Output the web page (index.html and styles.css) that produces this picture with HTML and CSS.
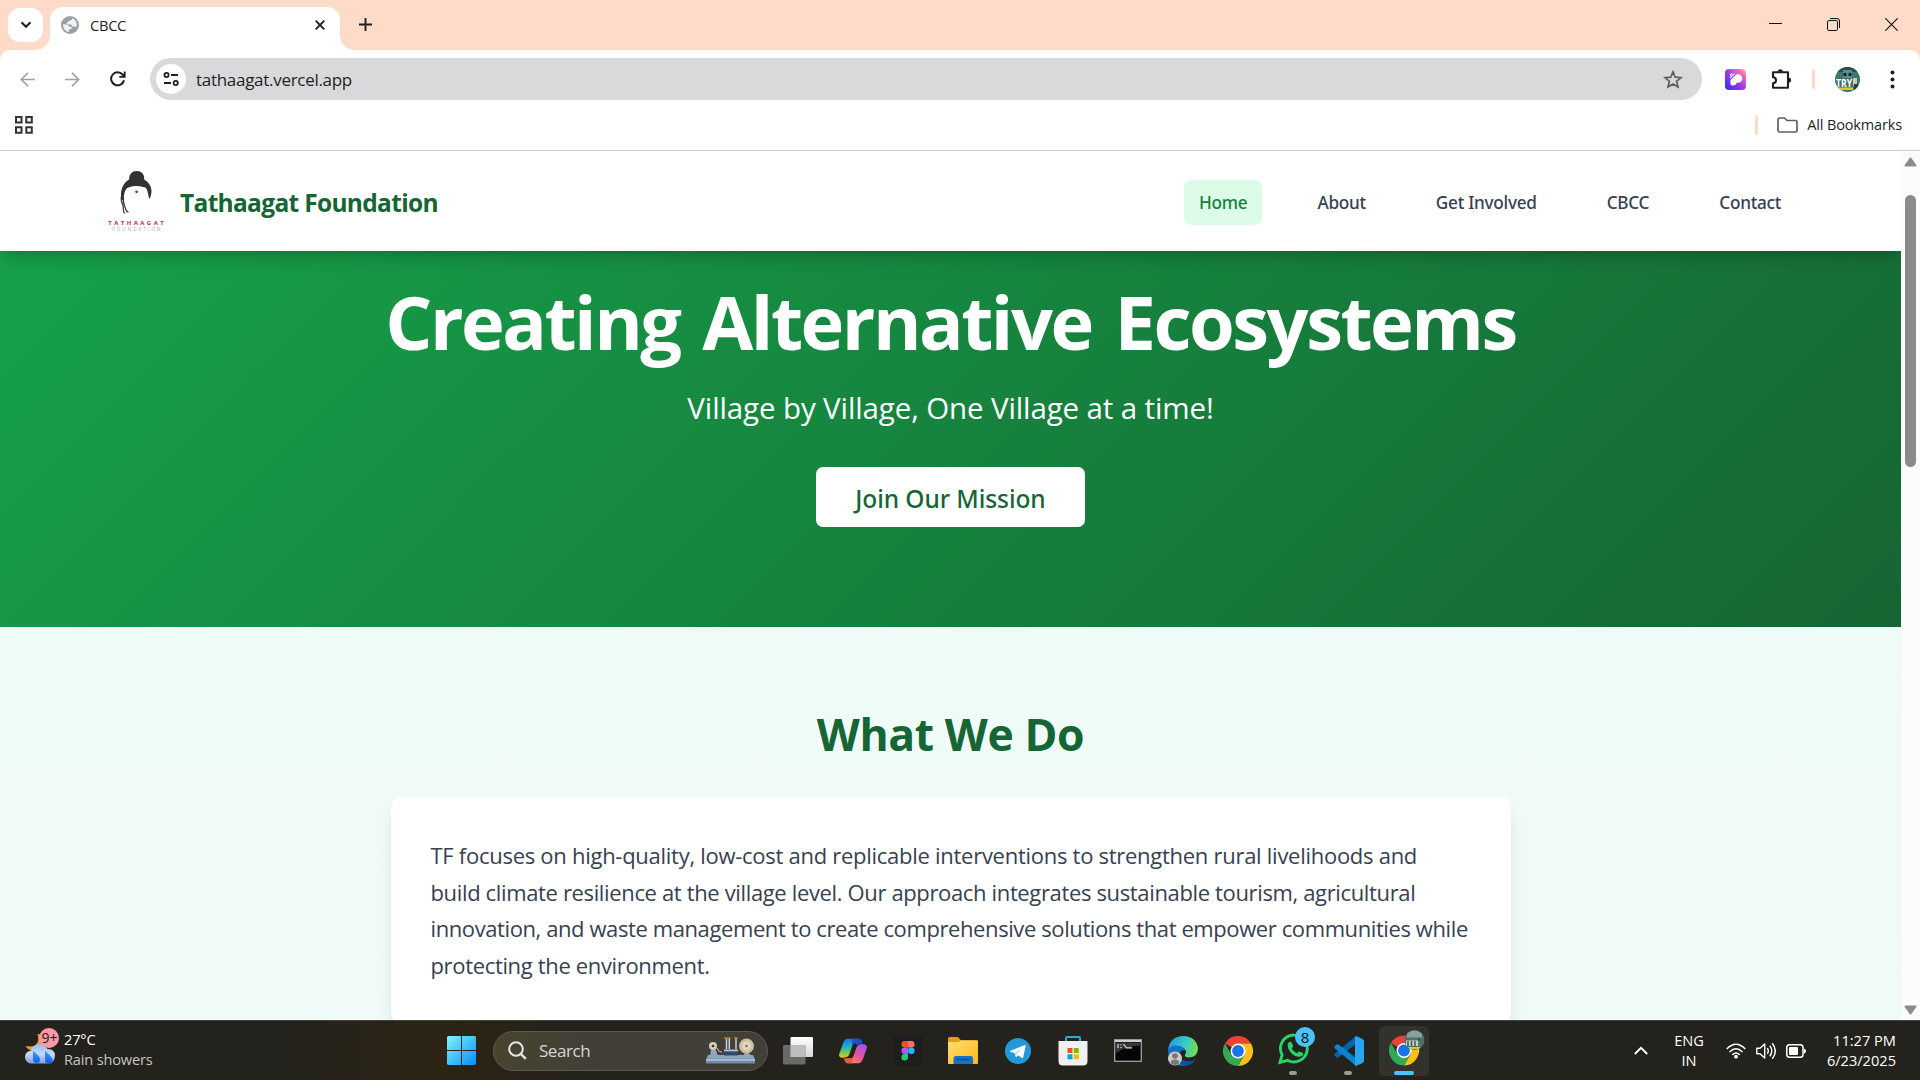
FILE: index.html
```html
<!DOCTYPE html>
<html lang="en">
<head>
<meta charset="utf-8">
<title>CBCC</title>
<link rel="stylesheet" href="styles.css">
</head>
<body>
<div class="screen">
  <div class="tabstrip">
    <button class="tab-search" aria-label="Search tabs"><svg width="12" height="8" viewBox="0 0 12 8"><path d="M1.5 1.2 6 5.7l4.500-4.500" fill="none" stroke="#1f1f1f" stroke-width="2.100"/></svg></button>
    <div class="tab">
      <svg class="favicon" width="18" height="18" viewBox="0 0 18 18"><circle cx="9" cy="9" r="9" fill="#9aa0a6"/><path d="M2 8.200 6 8.500q1.800.3 2 2l2.300.5q1 .6.3 1.700L8 13.500V16Q2.500 15 2 9zM11 2.200q.5 1.800-1.300 2.300L7.500 5 7 6.500l-1.500.5.5 1.300 4 .2 1.500 2 3 .3 1.300-.5Q16.500 4 11 2.200z" fill="#f1f2f3"/></svg>
      <span class="tab-title">CBCC</span>
      <svg class="tab-close" width="10" height="10" viewBox="0 0 10 10"><path d="M.7.7l8.600 8.600M9.300.7.7 9.300" stroke="#1f1f1f" stroke-width="1.900"/></svg>
    </div>
    <svg class="new-tab" width="13" height="13" viewBox="0 0 13 13"><path d="M6.500 0v13M0 6.500h13" stroke="#1f1f1f" stroke-width="1.900"/></svg>
    <div class="window-buttons">
      <svg width="13" height="13" viewBox="0 0 13 13"><path d="M0 5.500h13" stroke="#111" stroke-width="1"/></svg>
      <svg width="13" height="13" viewBox="0 0 13 13"><rect x=".5" y="2.500" width="10" height="10" rx="1.300" fill="none" stroke="#111"/><path d="M3 .5h7a2.500 2.500 0 0 1 2.500 2.500v7" fill="none" stroke="#111"/></svg>
      <svg width="13" height="13" viewBox="0 0 13 13"><path d="M.3.3l12.400 12.400M12.700.3.3 12.700" stroke="#111" stroke-width="1.100"/></svg>
    </div>
  </div>

  <div class="toolbar-wrap">
    <div class="toolbar">
      <div class="nav-icons">
        <svg width="15" height="15" viewBox="0 0 15 15"><path d="M15 7.500H1.500M8 .8 1.300 7.500 8 14.200" fill="none" stroke="#a3a3a3" stroke-width="1.700"/></svg>
        <svg width="15" height="15" viewBox="0 0 15 15"><path d="M0 7.500h13.500M7 .8l6.700 6.700L7 14.200" fill="none" stroke="#a3a3a3" stroke-width="1.700"/></svg>
        <svg width="16" height="16" viewBox="0 0 16 16"><path d="M14 9.200A6.500 6.500 0 1 1 12.500 3.500L14.500 5.500" fill="none" stroke="#1f1f1f" stroke-width="2"/><path d="M15.600.5v6.300H9.300V5h4.400V.5z" fill="#1f1f1f"/></svg>
      </div>
      <div class="address">
        <span class="site-info"><svg width="16" height="14" viewBox="0 0 16 14"><g fill="none" stroke="#1f1f1f" stroke-width="1.800"><circle cx="3.500" cy="3" r="2.100"/><path d="M8 3h7M1 11h7"/><circle cx="12.700" cy="11" r="2.100"/></g></svg></span>
        <span class="url">tathaagat.vercel.app</span>
        <svg class="star" width="20" height="19" viewBox="0 0 20 19"><path d="M10 1.800l2.200 5.300 5.800.5-4.400 3.700 1.400 5.600-5-3-5 3 1.400-5.600L2 7.600l5.800-.5z" fill="none" stroke="#5f5f61" stroke-width="1.700"/></svg>
      </div>
      <div class="actions">
        <svg class="ext" width="21" height="21" viewBox="0 0 21 21"><defs><linearGradient id="ex" x1="0" y1="1" x2="1" y2="0"><stop offset="0" stop-color="#2f2be8"/><stop offset=".5" stop-color="#a03cf0"/><stop offset=".8" stop-color="#f768b5"/><stop offset="1" stop-color="#ffc98e"/></linearGradient></defs><rect width="21" height="21" rx="4" fill="url(#ex)"/><path d="M5.500 15V11L11.500 5.200h1.500a4.300 4.300 0 0 1 0 8.600h-1.500q-.5 2.700-3.500 2.700-2.500 0-2.500-1.500z" fill="#fff"/><path d="M5 6.500 7 4.500M5 9l4.500-4.500" stroke="#fff" stroke-width="1.100"/></svg>
        <svg class="puzzle" width="21" height="21" viewBox="0 0 21 21"><path d="M2 3.200h15v15.600H2v-4.600a2.900 2.900 0 0 0 0-6z" fill="none" stroke="#1f1f1f" stroke-width="2.100" stroke-linejoin="round"/><path d="M6.700 2.800a2.600 2.600 0 0 1 5.200 0zM17.500 8.400a2.600 2.600 0 0 1 0 5.200z" fill="#1f1f1f"/></svg>
        <span class="divider"></span>
        <svg class="avatar" width="25" height="25" viewBox="0 0 25 25"><defs><clipPath id="av"><circle cx="12.500" cy="12.500" r="12.500"/></clipPath></defs><g clip-path="url(#av)"><rect width="25" height="25" fill="#3c7471"/><path d="M0 0h25v5H0z" fill="#24504f"/><path d="M8 3h9v8H8z" fill="#5d8e88"/><circle cx="10" cy="7.500" r="1.700" fill="#222"/><circle cx="15" cy="7.500" r="1.700" fill="#222"/><path d="M18 11h4v8h-4z" fill="#d8c5b0"/><path d="M19 17h4v6h-4z" fill="#3b3634"/><path d="M3 20.500h15V23H3z" fill="#e8c31b"/><text x="1" y="20" font-size="10.500" font-weight="700" textLength="16" lengthAdjust="spacingAndGlyphs" fill="#fff">TRY</text></g></svg>
        <svg class="dots" width="5" height="19" viewBox="0 0 5 19"><g fill="#1f1f1f"><circle cx="2.500" cy="2.500" r="2"/><circle cx="2.500" cy="9.500" r="2"/><circle cx="2.500" cy="16.500" r="2"/></g></svg>
      </div>
    </div>
    <div class="bookmarks">
      <svg width="18" height="18" viewBox="0 0 18 18"><path d="M1 1h5.500v5.500H1zM11.300 1h5.500v5.500h-5.500zM1 11.300h5.500v5.500H1zM11.300 11.300h5.500v5.500h-5.500z" fill="none" stroke="#333" stroke-width="2"/></svg>
      <span class="divider"></span>
      <svg class="folder" width="21" height="16" viewBox="0 0 21 16"><path d="M1 13.500v-11Q1 1 2.500 1h5l2.500 2.500h8.500Q20 3.500 20 5v8.500Q20 15 18.500 15h-16Q1 15 1 13.500z" fill="none" stroke="#5f5f5f" stroke-width="1.700"/></svg>
      <span class="bm-text">All Bookmarks</span>
    </div>
  </div>

  <div class="viewport">
    <div class="page">
      <header class="site-header">
        <svg class="logo" width="65" height="70" viewBox="105 165 65 70">
          <g fill="#323232"><path d="M129 180q0-9 7.700-9t7.700 9z"/><path d="M121.200 199C119.500 187 126 179.500 132 178.500h9c8 2 11.300 9 10.400 14.500Q150.800 197 149.300 199C147.500 192 147.500 186.500 143 187q-7-2.200-14 0.300C125 188.500 124 193 123.500 201z"/></g>
          <path d="M121.700 196c-2 5 1.500 8 1.500 11 .2 4 .5 6.500 2 6M123.500 197c-1 5 .8 8 1.500 10 .8 3.500 2 5 3.500 5.200" fill="none" stroke="#323232" stroke-width="1.200"/>
          <circle cx="136.600" cy="191.800" r="1.400" fill="#c42035"/>
          <text x="108.200" y="224.500" font-size="6" font-weight="700" textLength="55.500" fill="#c22a45">TATHAAGAT</text>
          <text x="112.300" y="230.600" font-size="4.500" textLength="48" fill="#a9a9a9">FOUNDATION</text>
        </svg>
        <span class="brand">Tathaagat Foundation</span>
        <nav class="nav">
          <a class="active">Home</a><a>About</a><a>Get Involved</a><a>CBCC</a><a>Contact</a>
        </nav>
      </header>
      <section class="hero">
        <h1>Creating Alternative Ecosystems</h1>
        <p>Village by Village, One Village at a time!</p>
        <a class="cta">Join Our Mission</a>
      </section>
      <section class="about">
        <h2>What We Do</h2>
        <div class="card">
          <p><span class="l1">TF focuses on high-quality, low-cost and replicable interventions to strengthen rural livelihoods and</span> <span class="l2">build climate resilience at the village level. Our approach integrates sustainable tourism, agricultural</span> <span class="l3">innovation, and waste management to create comprehensive solutions that empower communities while</span> <span class="l4">protecting the environment.</span></p>
        </div>
      </section>
    </div>
    <div class="scrollbar">
      <svg width="13" height="10" viewBox="0 0 13 10"><path d="M6.500 1.500 11.500 8.500h-10z" fill="#8b8b8b" stroke="#8b8b8b" stroke-width="2" stroke-linejoin="round"/></svg>
      <span class="thumb"></span>
      <svg class="down" width="13" height="10" viewBox="0 0 13 10"><path d="M6.500 8.500 1.500 1.500h10z" fill="#8b8b8b" stroke="#8b8b8b" stroke-width="2" stroke-linejoin="round"/></svg>
    </div>
  </div>

  <div class="taskbar">
    <div class="weather">
      <svg width="36" height="38" viewBox="0 0 36 38"><defs><linearGradient id="cl" x1="0" y1="0" x2="0" y2="1"><stop offset="0" stop-color="#8fbdf7"/><stop offset=".5" stop-color="#c5d9fa"/><stop offset="1" stop-color="#7f9fe0"/></linearGradient><linearGradient id="dr" x1="0" y1="0" x2="0" y2="1"><stop offset="0" stop-color="#3f9cf8"/><stop offset="1" stop-color="#0c5fe6"/></linearGradient></defs><path d="M12.500 7Q15 15 10 18.500 6 20 .5 19q3 5 9 4.500L20 17V8z" fill="#f0a020"/><path d="M7 36.500a6.500 6.500 0 0 1-1-13q2-6 8-6.500 6 0 8.500 5 7-.5 7.500 6.500-.5 7-6 8z" fill="url(#cl)"/><path d="M8 24q7 5 7 8.500a3.500 3.500 0 0 1-7 0zM20 24q7.500 6 7.500 9a3.700 3.700 0 0 1-7.500 0z" fill="url(#dr)"/><circle cx="24" cy="11" r="10" fill="#ff99a4"/><text x="16.500" y="16.200" font-size="14" textLength="16" lengthAdjust="spacingAndGlyphs" fill="#1a1a1a">9+</text></svg>
      <div class="weather-text"><span>27°C</span><span class="dim">Rain showers</span></div>
    </div>
    <div class="start"><svg width="29" height="29" viewBox="0 0 29 29"><defs><linearGradient id="wn" x1="0" y1="0" x2="1" y2="1"><stop offset="0" stop-color="#7df4ff"/><stop offset="1" stop-color="#0a8df5"/></linearGradient></defs><path d="M1 0h13v14H0V1zM15 0h13l1 1v13H15zM0 15h14v14H1l-1-1zM15 15h14v13l-1 1H15z" fill="url(#wn)"/></svg></div>
    <div class="search">
      <svg width="19" height="19" viewBox="0 0 19 19"><circle cx="8" cy="8" r="6.800" fill="none" stroke="#e6e6e6" stroke-width="2"/><path d="M12.800 12.800l5 5" stroke="#e6e6e6" stroke-width="2.400"/></svg>
      <span>Search</span>
      <svg class="art" width="49" height="27" viewBox="0 0 49 27"><path d="M2 18h45l2 5H0z" fill="#8ea6c4"/><path d="M0 21.500h49v5H0z" fill="#7189ac"/><path d="M0 22h49v2H0z" fill="#a3b7cf"/><path d="M4 19l1-6q2.500-2 5 0l2 6zM37 19l3-5 6 5z" fill="#8ea6c4"/><path d="M18 13h14v5.500H18z" fill="#33486b"/><path d="M18 12.500h14v1.800H18z" fill="#b6c6d8"/><path d="M20.500 1.500V12M23.300 1.500V12M30 1.500V12" stroke="#d4dbe2" stroke-width="1.400"/><path d="M18 1h6.500M28 1h3.500" stroke="#b58a36" stroke-width="1.700"/><circle cx="40.500" cy="9" r="7.500" fill="#cdbf9f"/><circle cx="40.500" cy="9" r="4.500" fill="#e0d6bd"/><circle cx="40.500" cy="9" r="1.200" fill="#7b6a50"/><circle cx="7" cy="9" r="4" fill="#d8ccb0"/><circle cx="7" cy="9" r="1.300" fill="#333"/><path d="M11 11q2 5 5 4" stroke="#d8ccb0" fill="none"/></svg>
    </div>
    <div class="apps">
      <span class="app"><svg width="30" height="28" viewBox="0 0 30 28"><defs><linearGradient id="tv" x1="0" y1="0" x2="0" y2="1"><stop offset="0" stop-color="#fff"/><stop offset="1" stop-color="#d8d8d8"/></linearGradient></defs><rect x="7.500" width="22.500" height="20" rx="1" fill="url(#tv)"/><rect y="8" width="22.500" height="19.500" rx="1" fill="#777" fill-opacity=".85"/><path d="M7.500 8h15v12h-15z" fill="#bdbdbd"/></svg></span>
      <span class="app"><svg width="30" height="26" viewBox="0 0 30 26"><defs><linearGradient id="ca" x1="0" y1="0" x2="0" y2="1"><stop offset="0" stop-color="#1b73e8"/><stop offset=".45" stop-color="#22b5c8"/><stop offset=".75" stop-color="#7cc84a"/><stop offset="1" stop-color="#f3c21c"/></linearGradient><linearGradient id="cb" x1=".7" y1="0" x2="0" y2="1"><stop offset="0" stop-color="#a653e8"/><stop offset=".5" stop-color="#e9568e"/><stop offset="1" stop-color="#ff9b4c"/></linearGradient></defs><path d="M18 .8h3q2.500.3 3.300 4.200H17q-2 0-2.700 2.500l-2.800 8.500Q10.500 19 6.500 19.500 1 20.500 1 16.500L5 5.500Q6.300.8 9.500.8z" fill="url(#ca)"/><path d="M12 25.200H9.500q-2.500-.2-3.300-4.700h6.300q2.300 0 3-2.500l3-8.500Q19.800 6 23.500 6 29 5.800 29 9.500l-4 11.500q-1.500 4.200-5 4.200z" fill="url(#cb)"/><path d="M14 .8h7q2.500.3 3.300 4.500-3.800-.3-5.300 1.700L17 5q-2 0-2.700 2.500z" fill="#1a53c9"/><path d="M6.200 20.500h6.300q2 0 2.800-1.500L14 25.200H9.500Q7 25 6.200 20.500z" fill="#f0583c"/></svg></span>
      <span class="app"><svg width="30" height="30" viewBox="0 0 30 30"><rect width="30" height="30" rx="3" fill="#1e1e1e"/><path d="M11.700 5H15v6.500h-3.300a3.250 3.250 0 0 1 0-6.500z" fill="#f24e1e"/><path d="M15 5h3.300a3.250 3.250 0 0 1 0 6.500H15z" fill="#ff7262"/><path d="M11.700 11.500H15V18h-3.300a3.250 3.250 0 0 1 0-6.500z" fill="#a259ff"/><circle cx="18.300" cy="14.750" r="3.250" fill="#1abcfe"/><path d="M11.700 18H15v3.300a3.300 3.300 0 1 1-3.300-3.300z" fill="#24cb71"/></svg></span>
      <span class="app"><svg width="30" height="27" viewBox="0 0 30 27"><defs><linearGradient id="fo" x1="0" y1="0" x2="1" y2="1"><stop offset="0" stop-color="#ffdf75"/><stop offset="1" stop-color="#fbb915"/></linearGradient></defs><path d="M0 1.500Q0 0 1.500 0H9q1 0 2 1l2 2.500H28q2 0 2 2V9H0z" fill="#e0a010"/><path d="M0 6q0-1 1-1h9l3-1.800h16q1 0 1 1V26q0 1-1 1H1q-1 0-1-1z" fill="url(#fo)"/><path d="M5.500 27v-5.500q0-2.500 2.500-2.500h14.500q2.500 0 2.500 2.500V27z" fill="#1272c4"/><path d="M8.500 22.500h13" stroke="#094d8c" stroke-width="1.300"/></svg></span>
      <span class="app"><svg width="26" height="26" viewBox="0 0 26 26"><circle cx="13" cy="13" r="13" fill="#2398d6"/><path d="M5 13 20 7q.8-.2.600.7L18.200 19.500q-.3.900-1.200.4l-3.800-2.700-1.900 1.900q-.5.300-.6-.3L9.500 15 5.200 13.700q-.8-.3-.2-.7z" fill="#fff"/><path d="M9.700 15 17 10.200l-5.500 5.900-.6 2.700z" fill="#b9d8ea"/></svg></span>
      <span class="app"><svg width="30" height="30" viewBox="0 0 30 30"><path d="M8 6.500V2q0-1 1-1h12q1 0 1 1v4.500" fill="none" stroke="#28a8ea" stroke-width="2"/><path d="M.5 5h29v20q0 4.500-4.500 4.500H5Q.5 29.500.5 25z" fill="#f0f0f0"/><path d="M9.500 12h5v5h-5z" fill="#f25022"/><path d="M15.800 12h5v5h-5z" fill="#7fba00"/><path d="M9.500 18.300h5v5h-5z" fill="#00a4ef"/><path d="M15.800 18.300h5v5h-5z" fill="#ffb900"/></svg></span>
      <span class="app"><svg width="28" height="23" viewBox="0 0 28 23"><rect x=".7" y=".7" width="26.600" height="21.600" fill="#050505" stroke="#9aa0a6" stroke-width="1.300"/><path d="M1 1h26v2H1z" fill="#c9ced2"/><path d="M2 3.500h24v3Q12 7 2 14z" fill="#383838"/><path d="M4 5v4M7 5.500v1M7 8v1M9.500 5l3 4M12 8.800h6" stroke="#ddd" stroke-width="1.200"/></svg></span>
      <span class="app"><svg width="30" height="30" viewBox="0 0 30 30"><defs><linearGradient id="ea" x1="0" y1=".3" x2="1" y2=".5"><stop offset="0" stop-color="#1b9de2"/><stop offset=".55" stop-color="#36c9c9"/><stop offset="1" stop-color="#76dc4c"/></linearGradient></defs><path d="M0 14Q2 0 15.500 0 28 .5 30 12q0 9-9 9.500-5 0-4-3 2.500-3-1-6Q10 9 0 14z" fill="url(#ea)"/><path d="M0 15Q2 9 9 9.500q7 .8 8 5-5-1-5.500 4Q12 26 22 25.500q3 0 6-2.500Q23 30 15 30 1 29 0 15z" fill="#1272c9"/><path d="M11.500 18.500Q12 26 22 25.500q3 0 6-2.500Q23 30 16 30 8 27 11.500 18.500z" fill="#0c4f9b"/><circle cx="7" cy="22.500" r="7" fill="#c9c9c9"/><circle cx="7" cy="20" r="2.800" fill="#777"/><path d="M2.500 27Q3 23.500 7 23.500t4.500 3.500Q7 31 2.500 27z" fill="#777"/></svg></span>
      <span class="app"><svg width="30" height="30" viewBox="0 0 30 30"><g id="chrome"><path d="M15 15 2 7.500A15 15 0 0 1 28 7.500H15z" fill="#ea4335"/><path d="M15 7.500h13A15 15 0 0 1 15 30l6.500-11.200z" fill="#fbc116"/><path d="M21.500 18.800 15 30A15 15 0 0 1 2 7.500l6.500 11.300z" fill="#34a853"/><circle cx="15" cy="15" r="7.500" fill="#fff"/><circle cx="15" cy="15" r="5.900" fill="#1a73e8"/></g></svg></span>
      <span class="app running"><svg class="whatsapp" width="38" height="38" viewBox="0 0 38 38"><path d="M2 35.500l2.100-7.600A13.400 13.400 0 1 1 9.500 33.300z" fill="none" stroke="#25d366" stroke-width="2.900"/><path d="M9.500 17.500q1-3.500 3.700-2.500l2 4-1.500 2.500q2 3.500 5.300 4.800l2.200-2.100 4 2q.5 3-3.500 3.500-5 .3-9.200-4.500-2.800-3.500-3-7.700z" fill="#25d366"/><circle cx="27" cy="10" r="10" fill="#4cc2ff"/><text x="27" y="15.500" text-anchor="middle" font-size="15" fill="#111">8</text></svg></span>
      <span class="app running"><svg class="vscode" width="30" height="30" viewBox="0 0 30 30"><path d="M22 0v8L4.500 21.500Q3.500 22.200 2.500 21.500L.5 19.500q-.7-1 .2-1.700z" fill="#0065a9"/><path d="M22 30v-8L4.500 8.500Q3.500 7.800 2.500 8.500L.5 10.500q-.7 1 .2 1.700z" fill="#0b84cf"/><path d="M22 0l6.500 3Q30 4 30 5.200v19.600q0 1.200-1.500 2.200L22 30l-1-.8V.8z" fill="#2aa5f2"/></svg></span>
      <span class="app current"><svg width="36" height="36" viewBox="0 0 36 36"><defs><clipPath id="av2"><circle cx="25.500" cy="10" r="10"/></clipPath></defs><use href="#chrome" x="0" y="5.500"/><g clip-path="url(#av2)"><path d="M15 0h21v20H15z" fill="#4a716c"/><path d="M18 3.500q7-6 15 0v4H18z" fill="#86a39c"/><path d="M17 10.500h14v5.500H17z" fill="#c6d2cc"/><path d="M19 11v5M22.500 11v5M26 11v5M30 8v8" stroke="#34504d" stroke-width="1.400"/><path d="M16 17h15v2H16z" fill="#e2c62b"/></g></svg></span>
    </div>
    <div class="tray">
      <svg width="14" height="9" viewBox="0 0 14 9"><path d="M.8 8 7 1.800 13.200 8" fill="none" stroke="#fff" stroke-width="1.800"/></svg>
      <div class="lang"><span>ENG</span><span>IN</span></div>
      <div class="status">
        <svg width="20" height="16" viewBox="0 0 20 16"><g fill="none" stroke="#fff" stroke-width="1.500"><path d="M.7 6q9.300-9.500 18.600 0M3.500 9q6.500-6.500 13 0M6.300 11.800q3.700-3.700 7.400 0"/></g><circle cx="10" cy="13.700" r="1.900" fill="#fff"/></svg>
        <svg width="20" height="18" viewBox="0 0 20 18"><path d="M.8 6.200H4L8.700 2v14L4 11.800H.8z" fill="none" stroke="#fff" stroke-width="1.400" stroke-linejoin="round"/><path d="M11.300 6.200q2 2.800 0 5.600M13.800 3.800q4 5.200 0 10.400M16.300 1.300q6 7.700 0 15.400" fill="none" stroke="#fff" stroke-width="1.400"/></svg>
        <svg width="20" height="14" viewBox="0 0 20 14"><rect x=".8" y=".8" width="16.200" height="12.400" rx="2.800" fill="none" stroke="#fff" stroke-width="1.500"/><rect x="3" y="3" width="9" height="8" rx="1" fill="#fff"/><path d="M18 4.500q2 .5 2 2.500t-2 2.500z" fill="#fff"/></svg>
      </div>
      <div class="clock"><span>11:27 PM</span><span>6/23/2025</span></div>
    </div>
  </div>
</div>
</body>
</html>
```
FILE: styles.css
```css
* { box-sizing: border-box; }
body { margin: 0; overflow: hidden; font-family: "Open Sans", "Noto Sans", sans-serif; }
svg { display: block; flex: none; }
h1, h2, p { margin: 0; }

.screen { width: 1920px; height: 1080px; display: flex; flex-direction: column; overflow: hidden; background: #fff; }

/* Tab strip */
.tabstrip { height: 50px; flex: none; display: flex; background: #fddbc8; padding: 7px 22px 0 8px; }
.tab-search { width: 35px; height: 34px; margin: 1px 7px 0 0; padding: 0; border: 0; border-radius: 12px; background: #fff; display: flex; align-items: center; justify-content: center; }
.tab { position: relative; width: 290px; height: 43px; padding: 0 15px 7px 11px; background: #fff; border-radius: 13px 13px 0 0; display: flex; align-items: center; }
.tab::before, .tab::after { content: ""; position: absolute; bottom: 0; width: 14px; height: 14px; }
.tab::before { left: -14px; background: radial-gradient(circle at 0 0, transparent 13.500px, #fff 14px); }
.tab::after { right: -14px; background: radial-gradient(circle at 100% 0, transparent 13.500px, #fff 14px); }
.tab-title { margin-left: 11px; font-size: 14.700px; letter-spacing: -0.3px; color: #1f1f1f; }
.tab-close { margin-left: auto; }
.new-tab { margin: 11px 0 0 19px; }
.window-buttons { margin: 11px 0 0 auto; display: flex; gap: 45px; }

/* Toolbar */
.toolbar-wrap { height: 101px; flex: none; background: #fddbc8; border-bottom: 1px solid #c8c8c8; }
.toolbar { height: 58px; background: #fff; border-radius: 10px 10px 0 0; display: flex; align-items: center; padding: 0 25px 0 20px; }
.nav-icons { width: 130px; display: flex; gap: 30px; align-items: center; }
.address { width: 1552px; height: 42px; border-radius: 21px; background: #d9d9db; display: flex; align-items: center; padding: 0 19px 0 6px; }
.site-info { width: 30px; height: 30px; border-radius: 50%; background: #fff; display: flex; align-items: center; justify-content: center; }
.url { margin-left: 10px; font-size: 17px; letter-spacing: -0.29px; color: #1f1f1f; }
.star { margin-left: auto; }
.actions { flex: 1; display: flex; align-items: center; }
.ext { margin-left: 23px; }
.puzzle { margin-left: 25px; }
.divider { width: 3px; height: 20px; border-radius: 2px; background: #fddbc8; }
.toolbar .divider { margin-left: 20px; }
.avatar { margin-left: 20px; }
.dots { margin-left: 30px; }
.bookmarks { height: 42px; background: #fff; display: flex; align-items: center; padding: 0 18px 9px 15px; }
.bookmarks .divider { margin-left: auto; }
.folder { margin: 0 9px 0 19px; }
.bm-text { font-size: 14.500px; letter-spacing: -0.15px; color: #1f1f1f; }

/* Web page */
.viewport { height: 869px; flex: none; display: flex; overflow: hidden; }
.page { width: 1901px; background: linear-gradient(#effcf5, #effbf6 476px, #f0faf9 869px); overflow: hidden; }
.site-header { position: relative; height: 100px; background: #fff; display: flex; align-items: center; padding: 3px 105px 0; box-shadow: 0 12px 19px -4px rgba(0, 0, 0, .14), 0 5px 8px -4px rgba(0, 0, 0, .14); }
.logo { margin-top: -5px; }
.brand { margin-left: 10px; font-size: 24.500px; font-weight: 700; letter-spacing: -0.68px; color: #166534; }
.nav { margin-left: auto; margin-top: -1px; display: flex; gap: 40px; font-family: "Noto Sans", "Open Sans", sans-serif; font-size: 17.200px; font-weight: 500; letter-spacing: -0.27px; color: #374151; }
.nav a { height: 45px; line-height: 46px; padding: 0 15px; border-radius: 7px; }
.nav .active { background: #dcfce7; color: #15803d; }

.hero { height: 376px; padding-top: 33px; display: flex; flex-direction: column; align-items: center; color: #fff; background: linear-gradient(135deg, #16a34a, #166534) 0 -68px / 1901px 444px no-repeat; }
.hero h1 { font-size: 74px; line-height: 76px; letter-spacing: -2.500px; word-spacing: 6px; }
.hero p { margin-top: 29px; font-size: 29.500px; line-height: 38px; letter-spacing: -0.12px; }
.cta { width: 269px; height: 60px; margin-top: 40px; padding-top: 2px; border-radius: 7px; background: #fff; color: #166534; font-family: "Noto Sans", sans-serif; font-weight: 500; font-size: 24.500px; letter-spacing: -0.08px; line-height: 60px; text-align: center; }

.about { padding-top: 79px; display: flex; flex-direction: column; align-items: center; }
.about h2 { font-size: 44.500px; line-height: 56px; letter-spacing: -0.400px; color: #166534; }
.card { width: 1120px; height: 226px; margin-top: 35px; padding: 40px; border-radius: 10px; background: #fff; box-shadow: 0 12px 19px -4px rgba(0, 0, 0, .1), 0 5px 8px -5px rgba(0, 0, 0, .1); }
.card p { font-size: 22px; line-height: 36.560px; color: #374151; white-space: nowrap; }
.card span { display: block; }
.card .l1 { letter-spacing: -0.275px; }
.card .l2 { letter-spacing: -0.355px; }
.card .l3 { letter-spacing: -0.402px; }
.card .l4 { letter-spacing: -0.340px; }

.scrollbar { width: 19px; background: #fcfcfc; display: flex; flex-direction: column; align-items: center; padding: 6px 0 5px; }
.thumb { width: 11px; height: 272px; margin-top: 28px; border-radius: 6px; background: #8b8b8b; }
.down { margin-top: auto; }

/* Taskbar */
.taskbar { height: 60px; flex: none; display: flex; align-items: center; background: radial-gradient(circle at 440px 30px, #2d2414, #24221c 150px, #24221c); border-top: 1px solid #41413d; color: #fff; font-size: 14.600px; line-height: 20px; }
.weather { width: 434px; padding-left: 25px; display: flex; align-items: center; gap: 3px; }
.weather svg { margin-top: -9px; }
.weather-text, .lang, .clock { display: flex; flex-direction: column; padding-bottom: 2px; }
.weather-text { padding-bottom: 4px; letter-spacing: -0.18px; }
.dim { color: #c4c4c2; }
.start { width: 55px; display: flex; justify-content: center; }
.search { width: 275px; height: 40px; margin: 0 2px 0 4px; padding: 0 12px 0 14px; border: 1px solid #5c5951; border-radius: 20px; background: linear-gradient(90deg, #48442f, #413e37 40%, #413f38); display: flex; align-items: center; font-size: 17px; letter-spacing: -0.45px; color: #d6d6d3; }
.search span { margin-left: 12px; }
.art { margin-left: auto; }
.apps { display: flex; height: 59px; align-items: center; }
.app { position: relative; width: 55px; height: 50px; display: flex; align-items: center; justify-content: center; }
.running::after, .current::after { content: ""; position: absolute; bottom: 1px; left: 24px; width: 8px; height: 4px; border-radius: 2px; background: #9c9a96; }
.whatsapp { margin: -9px 0 0 8px; }
.vscode { margin-left: 2px; }
.current { width: 50px; margin-left: 4px; border-radius: 5px; background: #33312c; }
.current svg { margin: -6px 0 0 6px; }
.current::after { left: 15px; width: 20px; background: #4cc2ff; }
.tray { margin-left: auto; padding-right: 24px; display: flex; align-items: center; }
.lang { width: 58px; margin-left: 12px; align-items: center; }
.status { display: flex; align-items: center; gap: 10px; margin-left: 8px; }
.clock { width: 90px; align-items: flex-end; }
```
